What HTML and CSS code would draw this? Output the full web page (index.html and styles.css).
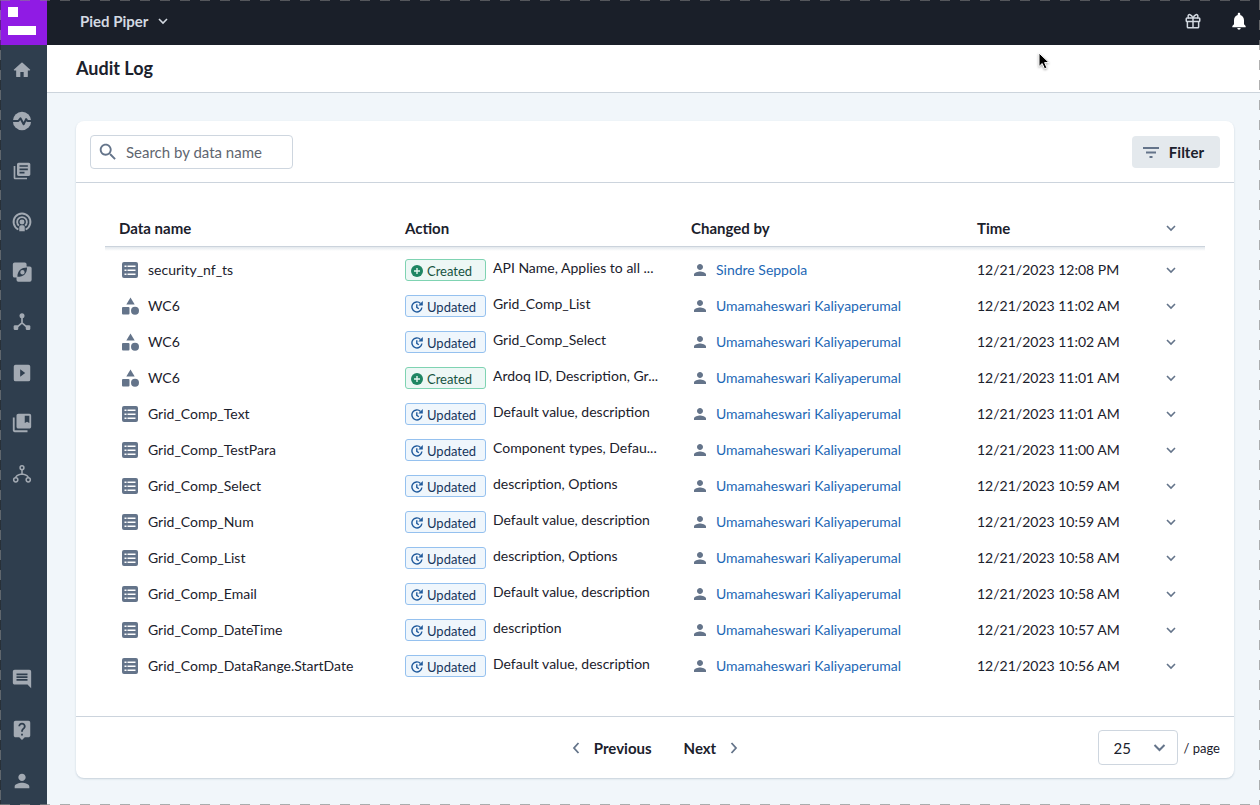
FILE: index.html
```html
<!DOCTYPE html>
<html lang="en">
<head>
<meta charset="utf-8">
<title>Audit Log</title>
<link rel="stylesheet" href="styles.css">
</head>
<body>
<svg class="sprite" aria-hidden="true">
  <symbol id="home" viewBox="0 0 24 24"><path d="M10 20.5v-6h4v6h4.2c.5 0 .8-.3.8-.8V12.500h2.200c.7 0 .9-.7.4-1.100L12.700 3.400a1 1 0 0 0-1.400 0L2.400 11.400c-.5.4-.3 1.100.4 1.100H5v7.200c0 .5.3.8.8.8z"/></symbol>
  <symbol id="pulse" viewBox="0 0 24 24"><circle cx="12" cy="12" r="10"/><path fill="none" stroke="#2f3e4e" stroke-width="2.200" stroke-linejoin="round" d="M1 12h7l2.300-3 3.500 6.500L16.500 10l1.500 2h5"/></symbol>
  <symbol id="books" viewBox="0 0 24 24"><path d="M4 6H2v14c0 1.100.9 2 2 2h14v-2H4V6zm16-4H8c-1.100 0-2 .9-2 2v12c0 1.100.9 2 2 2h12c1.100 0 2-.9 2-2V4c0-1.100-.9-2-2-2zm-1 9H9V9h10v2zm-4 4H9v-2h6v2zm4-8H9V5h10v2z"/></symbol>
  <symbol id="broadcast" viewBox="0 0 24 24"><g fill="none" stroke="currentColor" stroke-width="2"><path d="M8 20.200a9.200 9.200 0 1 1 8 0M8.600 16a5.300 5.300 0 1 1 6.800 0"/></g><circle cx="12" cy="12" r="2.700"/><path d="M9 22v-4.500a2 2 0 0 1 2-2h2a2 2 0 0 1 2 2V22z"/></symbol>
  <symbol id="compass" viewBox="0 0 24 24"><path fill-rule="evenodd" d="M4 1.500h11a2 2 0 0 1 2 2V6h3.500a2 2 0 0 1 2 2v12.500a2 2 0 0 1-2 2H8a2 2 0 0 1-2-2V18H4a2 2 0 0 1-2-2V3.500a2 2 0 0 1 2-2zM17.500 7c-6 0-10.500 3-10.500 10.300 7 0 10.500-4 10.500-10.300zM12.500 9.800a2.400 2.400 0 1 0 0 4.800 2.400 2.400 0 0 0 0-4.800z"/></symbol>
  <symbol id="hub" viewBox="0 0 24 24"><g fill="none" stroke="currentColor" stroke-width="2"><path d="M12 5v8L5 19M12 13l7 6"/></g><circle cx="12" cy="4.500" r="3"/><rect x="2" y="16" width="5.500" height="5.500" rx="1.500"/><rect x="16.500" y="16" width="5.500" height="5.500" rx="1.500"/></symbol>
  <symbol id="play" viewBox="0 0 24 24"><path fill-rule="evenodd" d="M5 3h14a2 2 0 0 1 2 2v14a2 2 0 0 1-2 2H5a2 2 0 0 1-2-2V5a2 2 0 0 1 2-2zm5 5v8l5.500-4z"/></symbol>
  <symbol id="bookmark" viewBox="0 0 24 24"><path d="M4 6H2v14c0 1.100.9 2 2 2h14v-2H4V6zm16-4H8c-1.100 0-2 .9-2 2v12c0 1.100.9 2 2 2h12c1.100 0 2-.9 2-2V4c0-1.100-.9-2-2-2zm0 10l-2.500-1.500L15 12V4h5v8z"/></symbol>
  <symbol id="tree" viewBox="0 0 24 24"><g fill="none" stroke="currentColor" stroke-width="1.800"><circle cx="12" cy="4.500" r="2.300"/><circle cx="4.500" cy="19" r="2.500"/><circle cx="19.500" cy="19" r="2.500"/><path d="M12 7v5c-5 1-7.500 2-7.500 4.500M12 12c5 1 7.500 2 7.500 4.500"/></g></symbol>
  <symbol id="chat" viewBox="0 0 24 24"><path d="M22 4c0-1.100-.9-2-2-2H4c-1.100 0-2 .9-2 2v12c0 1.100.9 2 2 2h14l4 4V4zM18 14H6v-2h12v2zm0-3H6V9h12v2zm0-3H6V6h12v2z"/></symbol>
  <symbol id="help" viewBox="0 0 24 24"><path d="M19 2H5c-1.110 0-2 .9-2 2v14c0 1.100.89 2 2 2h4l3 3 3-3h4c1.100 0 2-.9 2-2V4c0-1.100-.9-2-2-2zm-6 16h-2v-2h2v2zm2.070-7.750l-.9.920C13.450 11.900 13 12.500 13 14h-2v-.5c0-1.100.45-2.100 1.170-2.830l1.240-1.260c.37-.36.59-.86.59-1.410 0-1.100-.9-2-2-2s-2 .9-2 2H8c0-2.210 1.790-4 4-4s4 1.790 4 4c0 .88-.36 1.680-.93 2.250z"/></symbol>
  <symbol id="person" viewBox="0 0 24 24"><path d="M12 12c2.210 0 4-1.790 4-4s-1.790-4-4-4-4 1.790-4 4 1.790 4 4 4zm0 2c-2.670 0-8 1.340-8 4v2h16v-2c0-2.660-5.330-4-8-4z"/></symbol>
  <symbol id="gift" viewBox="0 0 24 24"><g fill="none" stroke="currentColor" stroke-width="2"><rect x="3" y="8" width="18" height="4.500" rx="1"/><path d="M4.500 12.500V20a1 1 0 0 0 1 1h13a1 1 0 0 0 1-1v-7.500M12 8v13M12 8C10 3 5.500 2 5.500 5.500 5.500 7 6 8 6.500 8M12 8c2-5 6.500-6 6.500-2.500 0 1.500-.5 2.500-1 2.500"/></g></symbol>
  <symbol id="bell" viewBox="0 0 24 24"><path d="M12 22.500c1.100 0 2-.9 2-2h-4c0 1.100.89 2 2 2zm6-6.500v-5c0-3.070-1.640-5.640-4.500-6.320V3.500c0-.83-.67-1.500-1.500-1.500s-1.500.67-1.500 1.500v1.180C7.630 5.360 6 7.920 6 11v5l-2 2v1.500h16V18l-2-2z"/></symbol>
  <symbol id="search" viewBox="0 0 24 24"><path d="M15.500 14h-.79l-.28-.27C15.410 12.590 16 11.110 16 9.500 16 5.910 13.090 3 9.500 3S3 5.910 3 9.500 5.910 16 9.500 16c1.610 0 3.090-.59 4.230-1.570l.27.28v.79l5 4.990L20.490 19l-4.990-5zm-6 0C7.010 14 5 11.990 5 9.500S7.010 5 9.500 5 14 7.010 14 9.500 11.990 14 9.500 14z"/></symbol>
  <symbol id="filter" viewBox="0 0 18 12"><path d="M1 1h16v2H1zM4 5.500h10v2H4zM7.500 10h3v2h-3z"/></symbol>
  <symbol id="down" viewBox="0 0 12 12"><path fill="none" stroke="currentColor" stroke-width="1.600" d="M2 4l4 4 4-4"/></symbol>
  <symbol id="left" viewBox="0 0 12 12"><path fill="none" stroke="currentColor" stroke-width="1.800" d="M8.500 1L4 6l4.500 5"/></symbol>
  <symbol id="right" viewBox="0 0 12 12"><path fill="none" stroke="currentColor" stroke-width="1.800" d="M3.500 1L8 6l-4.500 5"/></symbol>
  <symbol id="field" viewBox="0 0 18 18"><path fill-rule="evenodd" d="M3 1h12a2 2 0 0 1 2 2v12a2 2 0 0 1-2 2H3a2 2 0 0 1-2-2V3a2 2 0 0 1 2-2zm.5 3.500v1.500h2V4.500zm3 0v1.500h8V4.500zm-3 4v1.500h2V8.500zm3 0v1.500h8V8.500zm-3 4v1.500h2v-1.500zm3 0v1.500h8v-1.500z"/></symbol>
  <symbol id="shapes" viewBox="0 0 18 18"><path d="M9.500.5l4.200 7H5.300z"/><rect x="1" y="10" width="7.500" height="7.500" rx="1"/><circle cx="14" cy="13.700" r="4"/></symbol>
  <symbol id="plus" viewBox="0 0 12 12"><circle cx="6" cy="6" r="6"/><path stroke="#e6f6f0" stroke-width="1.400" d="M6 3v6M3 6h6"/></symbol>
  <symbol id="update" viewBox="0 0 12 12"><g fill="none" stroke="currentColor" stroke-width="1.400"><path d="M10.900 6.500A5 5 0 1 1 9.500 2.400"/><path d="M5.800 3.300v3l2 1.400"/></g><path d="M11.800 0v4.500H7.300z"/></symbol>
</svg>

<div class="app">
  <aside class="rail">
    <a class="logo" href="#" aria-label="Start page"><span class="logo-dot"></span><span class="logo-bar"></span></a>
    <nav class="rail-main" aria-label="Main">
      <a href="#" aria-label="Home"><svg class="i20"><use href="#home"/></svg></a>
      <a href="#" aria-label="Activity"><svg class="i22"><use href="#pulse"/></svg></a>
      <a href="#" aria-label="Library"><svg class="i20"><use href="#books"/></svg></a>
      <a href="#" aria-label="Broadcasts"><svg class="i22"><use href="#broadcast"/></svg></a>
      <a href="#" aria-label="Discover"><svg class="i22"><use href="#compass"/></svg></a>
      <a href="#" aria-label="Scenarios"><svg class="i20"><use href="#hub"/></svg></a>
      <a href="#" aria-label="Presentations"><svg class="i22"><use href="#play"/></svg></a>
      <a href="#" aria-label="Bookmarks"><svg class="i22"><use href="#bookmark"/></svg></a>
      <a href="#" aria-label="Metamodel"><svg class="i20"><use href="#tree"/></svg></a>
    </nav>
    <nav class="rail-foot" aria-label="Support">
      <a href="#" aria-label="Messages"><svg class="i22"><use href="#chat"/></svg></a>
      <a href="#" aria-label="Help"><svg class="i22"><use href="#help"/></svg></a>
      <a href="#" aria-label="Profile"><svg class="i22"><use href="#person"/></svg></a>
    </nav>
  </aside>

  <div class="page">
    <header class="topbar">
      <button class="org" type="button">Pied Piper<svg class="i12"><use href="#down"/></svg></button>
      <div class="top-actions">
        <button type="button" aria-label="What's new"><svg class="i18"><use href="#gift"/></svg></button>
        <button class="bell" type="button" aria-label="Notifications"><svg class="i20"><use href="#bell"/></svg></button>
      </div>
    </header>
    <div class="titlebar"><h1>Audit Log</h1></div>

    <main class="content">
      <section class="card">
        <div class="toolbar">
          <label class="search"><svg class="i22"><use href="#search"/></svg><input type="text" placeholder="Search by data name" aria-label="Search by data name"></label>
          <button class="filter" type="button"><svg><use href="#filter"/></svg>Filter</button>
        </div>

        <div class="table-wrap">
          <table>
            <colgroup><col class="c-main"><col class="c-main"><col class="c-main"><col><col class="c-toggle"></colgroup>
            <thead>
              <tr><th>Data name</th><th>Action</th><th>Changed by</th><th>Time</th><th class="toggle"><button type="button" aria-label="Expand all"><svg class="i12"><use href="#down"/></svg></button></th></tr>
            </thead>
            <tbody>
              <tr><td><div class="name"><svg><use href="#field"/></svg>security_nf_ts</div></td><td><div class="action"><span class="tag created"><svg><use href="#plus"/></svg>Created</span><span class="what">API Name, Applies to all ...</span></div></td><td><div class="user"><svg><use href="#person"/></svg><a href="#">Sindre Seppola</a></div></td><td>12/21/2023 12:08 PM</td><td class="toggle"><button type="button" aria-label="Expand"><svg class="i12"><use href="#down"/></svg></button></td></tr>
              <tr><td><div class="name"><svg><use href="#shapes"/></svg>WC6</div></td><td><div class="action"><span class="tag updated"><svg><use href="#update"/></svg>Updated</span><span class="what">Grid_Comp_List</span></div></td><td><div class="user"><svg><use href="#person"/></svg><a href="#">Umamaheswari Kaliyaperumal</a></div></td><td>12/21/2023 11:02 AM</td><td class="toggle"><button type="button" aria-label="Expand"><svg class="i12"><use href="#down"/></svg></button></td></tr>
              <tr><td><div class="name"><svg><use href="#shapes"/></svg>WC6</div></td><td><div class="action"><span class="tag updated"><svg><use href="#update"/></svg>Updated</span><span class="what">Grid_Comp_Select</span></div></td><td><div class="user"><svg><use href="#person"/></svg><a href="#">Umamaheswari Kaliyaperumal</a></div></td><td>12/21/2023 11:02 AM</td><td class="toggle"><button type="button" aria-label="Expand"><svg class="i12"><use href="#down"/></svg></button></td></tr>
              <tr><td><div class="name"><svg><use href="#shapes"/></svg>WC6</div></td><td><div class="action"><span class="tag created"><svg><use href="#plus"/></svg>Created</span><span class="what">Ardoq ID, Description, Gr...</span></div></td><td><div class="user"><svg><use href="#person"/></svg><a href="#">Umamaheswari Kaliyaperumal</a></div></td><td>12/21/2023 11:01 AM</td><td class="toggle"><button type="button" aria-label="Expand"><svg class="i12"><use href="#down"/></svg></button></td></tr>
              <tr><td><div class="name"><svg><use href="#field"/></svg>Grid_Comp_Text</div></td><td><div class="action"><span class="tag updated"><svg><use href="#update"/></svg>Updated</span><span class="what">Default value, description</span></div></td><td><div class="user"><svg><use href="#person"/></svg><a href="#">Umamaheswari Kaliyaperumal</a></div></td><td>12/21/2023 11:01 AM</td><td class="toggle"><button type="button" aria-label="Expand"><svg class="i12"><use href="#down"/></svg></button></td></tr>
              <tr><td><div class="name"><svg><use href="#field"/></svg>Grid_Comp_TestPara</div></td><td><div class="action"><span class="tag updated"><svg><use href="#update"/></svg>Updated</span><span class="what">Component types, Defau...</span></div></td><td><div class="user"><svg><use href="#person"/></svg><a href="#">Umamaheswari Kaliyaperumal</a></div></td><td>12/21/2023 11:00 AM</td><td class="toggle"><button type="button" aria-label="Expand"><svg class="i12"><use href="#down"/></svg></button></td></tr>
              <tr><td><div class="name"><svg><use href="#field"/></svg>Grid_Comp_Select</div></td><td><div class="action"><span class="tag updated"><svg><use href="#update"/></svg>Updated</span><span class="what">description, Options</span></div></td><td><div class="user"><svg><use href="#person"/></svg><a href="#">Umamaheswari Kaliyaperumal</a></div></td><td>12/21/2023 10:59 AM</td><td class="toggle"><button type="button" aria-label="Expand"><svg class="i12"><use href="#down"/></svg></button></td></tr>
              <tr><td><div class="name"><svg><use href="#field"/></svg>Grid_Comp_Num</div></td><td><div class="action"><span class="tag updated"><svg><use href="#update"/></svg>Updated</span><span class="what">Default value, description</span></div></td><td><div class="user"><svg><use href="#person"/></svg><a href="#">Umamaheswari Kaliyaperumal</a></div></td><td>12/21/2023 10:59 AM</td><td class="toggle"><button type="button" aria-label="Expand"><svg class="i12"><use href="#down"/></svg></button></td></tr>
              <tr><td><div class="name"><svg><use href="#field"/></svg>Grid_Comp_List</div></td><td><div class="action"><span class="tag updated"><svg><use href="#update"/></svg>Updated</span><span class="what">description, Options</span></div></td><td><div class="user"><svg><use href="#person"/></svg><a href="#">Umamaheswari Kaliyaperumal</a></div></td><td>12/21/2023 10:58 AM</td><td class="toggle"><button type="button" aria-label="Expand"><svg class="i12"><use href="#down"/></svg></button></td></tr>
              <tr><td><div class="name"><svg><use href="#field"/></svg>Grid_Comp_Email</div></td><td><div class="action"><span class="tag updated"><svg><use href="#update"/></svg>Updated</span><span class="what">Default value, description</span></div></td><td><div class="user"><svg><use href="#person"/></svg><a href="#">Umamaheswari Kaliyaperumal</a></div></td><td>12/21/2023 10:58 AM</td><td class="toggle"><button type="button" aria-label="Expand"><svg class="i12"><use href="#down"/></svg></button></td></tr>
              <tr><td><div class="name"><svg><use href="#field"/></svg>Grid_Comp_DateTime</div></td><td><div class="action"><span class="tag updated"><svg><use href="#update"/></svg>Updated</span><span class="what">description</span></div></td><td><div class="user"><svg><use href="#person"/></svg><a href="#">Umamaheswari Kaliyaperumal</a></div></td><td>12/21/2023 10:57 AM</td><td class="toggle"><button type="button" aria-label="Expand"><svg class="i12"><use href="#down"/></svg></button></td></tr>
              <tr><td><div class="name"><svg><use href="#field"/></svg>Grid_Comp_DataRange.StartDate</div></td><td><div class="action"><span class="tag updated"><svg><use href="#update"/></svg>Updated</span><span class="what">Default value, description</span></div></td><td><div class="user"><svg><use href="#person"/></svg><a href="#">Umamaheswari Kaliyaperumal</a></div></td><td>12/21/2023 10:56 AM</td><td class="toggle"><button type="button" aria-label="Expand"><svg class="i12"><use href="#down"/></svg></button></td></tr>
            </tbody>
          </table>
        </div>

        <footer class="pager">
          <div class="steps">
            <button type="button"><svg class="i12"><use href="#left"/></svg>Previous</button>
            <button type="button">Next<svg class="i12"><use href="#right"/></svg></button>
          </div>
          <div class="size">
            <span class="select"><select id="size" aria-label="Rows per page"><option>25</option><option>50</option><option>100</option></select><svg><use href="#down"/></svg></span>
            <label for="size">/ page</label>
          </div>
        </footer>
      </section>
    </main>
  </div>
</div>
<div class="marquee" aria-hidden="true"></div>
<svg class="pointer" viewBox="0 0 12 18" aria-hidden="true"><path d="M1 1v13.500l3.200-3 2.300 5.300 2.400-1-2.300-5.200H11z"/></svg>
</body>
</html>
```
FILE: styles.css
```css
* { box-sizing: border-box; }

body {
  margin: 0;
  font: 15px/20px Lato, "Liberation Sans", sans-serif;
  color: #1b212c;
  background: #f1f6fa;
}

button, input, select { font: inherit; color: inherit; }
button { border: 0; padding: 0; background: none; cursor: pointer; }
a { text-decoration: none; }
svg { display: block; flex: none; fill: currentColor; }

.sprite { position: absolute; width: 0; height: 0; }
.i12 { width: 12px; height: 12px; }
.i18 { width: 18px; height: 18px; }
.i20 { width: 20px; height: 20px; }
.i22 { width: 22px; height: 22px; }

.app { display: flex; min-height: 100vh; }

/* Side rail */
.rail {
  flex: none;
  display: flex;
  flex-direction: column;
  width: 47px;
  background: #2f3e4e;
  color: #a3aab3;
}
.logo {
  display: flex;
  flex-direction: column;
  gap: 9px;
  height: 45px;
  padding: 7px 8px;
  background: #901be4;
}
.logo-dot { width: 10px; height: 10px; background: #fff; }
.logo-bar { width: 28px; height: 9px; background: #fff; }
.rail nav { display: grid; justify-content: center; padding-right: 3px; }
.rail nav a { display: flex; align-items: center; justify-content: center; color: inherit; }
.rail-main { height: 454px; grid-auto-rows: 1fr; }
.rail-foot { grid-auto-rows: 48px; gap: 3px; margin-top: auto; }

/* Header */
.page { flex: 1; min-width: 0; display: flex; flex-direction: column; }
.topbar {
  display: flex;
  align-items: center;
  justify-content: space-between;
  height: 45px;
  padding: 0 11px 3px 33px;
  background: #1a1f29;
  color: #d3d9e1;
}
.org { display: flex; align-items: center; gap: 9px; font-weight: 700; }
.top-actions { display: flex; align-items: center; gap: 27px; }
.bell { color: #fff; }
.titlebar {
  padding: 11px 29px 12px;
  background: #fff;
  border-bottom: 1px solid #ccd4dc;
}
h1 { margin: 0; font-size: 18px; line-height: 24px; font-weight: 700; }

/* Card */
.content { padding: 28px 26px 27px 29px; }
.card {
  background: #fff;
  border-radius: 8px;
  box-shadow: 0 1px 2px #c5d0da;
}
.toolbar {
  display: flex;
  align-items: center;
  justify-content: space-between;
  padding: 14px 14px 13px;
  border-bottom: 1px solid #ccd4dd;
}
.search {
  display: flex;
  align-items: center;
  gap: 7px;
  width: 203px;
  height: 34px;
  padding: 0 8px 0 6px;
  border: 1px solid #ced6df;
  border-radius: 4px;
  color: #64748a;
}
.search input { flex: 1; min-width: 0; border: 0; padding: 0; outline: 0; background: none; }
.search input::placeholder { color: #5f6670; opacity: 1; }
.filter {
  display: flex;
  align-items: center;
  gap: 9px;
  height: 32px;
  padding: 0 16px 0 10px;
  border-radius: 4px;
  background: #e4e9ed;
  font-weight: 700;
}
.filter svg { width: 18px; height: 12px; color: #64748a; }

/* Table */
.table-wrap { padding: 27px 29px 32px; }
table { width: 100%; table-layout: fixed; border-spacing: 0; }
.c-main { width: 26%; }
.c-toggle { width: 68px; }
th, td { padding: 0 0 0 14px; text-align: left; white-space: nowrap; }
th {
  height: 42px;
  padding-bottom: 6px;
  font-weight: 700;
  background:
    linear-gradient(#cbd3dc, #cbd3dc) 0 36px / 100% 1px no-repeat,
    linear-gradient(#e3e8ed, #fff) 0 37px / 100% 4px no-repeat;
}
td { height: 36px; font-size: 14px; }
.toggle { padding-left: 0; }
.toggle button { display: block; margin: 0 auto; color: #64748a; }
.name, .user, .action { display: flex; align-items: center; }
.name { gap: 9px; padding-left: 2px; }
.name svg { width: 18px; height: 18px; color: #64748a; }
.user { gap: 7px; }
.user svg { width: 18px; height: 18px; color: #64748a; }
.user a { color: #1d67b5; }
.action { align-items: flex-start; gap: 7px; }
.what { line-height: 18px; }
.tag {
  display: flex;
  align-items: center;
  gap: 4px;
  width: 81px;
  height: 22px;
  padding: 1px 5px 0;
  border: 1px solid;
  border-radius: 3px;
  font-size: 13px;
}
.tag svg { width: 12px; height: 12px; }
.created { border-color: #7fd3b2; background: #edf7f5; color: #17533f; }
.created svg { color: #1f8563; }
.updated { border-color: #95c1ef; background: #eff6fc; color: #17365c; }
.updated svg { color: #205a9c; }

/* Pager */
.pager {
  display: grid;
  grid-template-columns: 1fr auto 1fr;
  align-items: center;
  padding: 13px 14px;
  border-top: 1px solid #ccd4dd;
}
.steps { grid-column: 2; display: flex; gap: 32px; }
.steps button { display: flex; align-items: center; gap: 12px; font-weight: 700; }
.steps svg { color: #64748a; }
.size { display: flex; align-items: center; justify-content: flex-end; gap: 6px; font-size: 13px; }
.select { position: relative; }
.select select {
  appearance: none;
  width: 80px;
  height: 35px;
  padding: 0 15px;
  border: 1px solid #ced6df;
  border-radius: 4px;
  background: #fff;
  font-size: 15px;
}
.select svg {
  position: absolute;
  top: 10px;
  right: 11px;
  width: 15px;
  height: 15px;
  color: #64748a;
  pointer-events: none;
}

/* Dashed selection frame and pointer over the page */
.marquee {
  position: fixed;
  inset: 0;
  pointer-events: none;
  background:
    repeating-linear-gradient(90deg, #8888 0 10px, #0000 10px 20px) top / 100% 1px no-repeat,
    repeating-linear-gradient(90deg, #888a 0 10px, #0000 10px 20px) bottom / 100% 1px no-repeat,
    repeating-linear-gradient(#2227 0 10px, #8888 10px 20px) left / 1px 100% no-repeat,
    repeating-linear-gradient(#888a 0 10px, #0000 10px 20px) right / 1px 100% no-repeat;
}
.pointer {
  position: fixed;
  left: 1038px;
  top: 52px;
  width: 12px;
  height: 18px;
  fill: #000;
  stroke: #fff;
  filter: drop-shadow(0 1px 1px #0005);
  pointer-events: none;
}
```
